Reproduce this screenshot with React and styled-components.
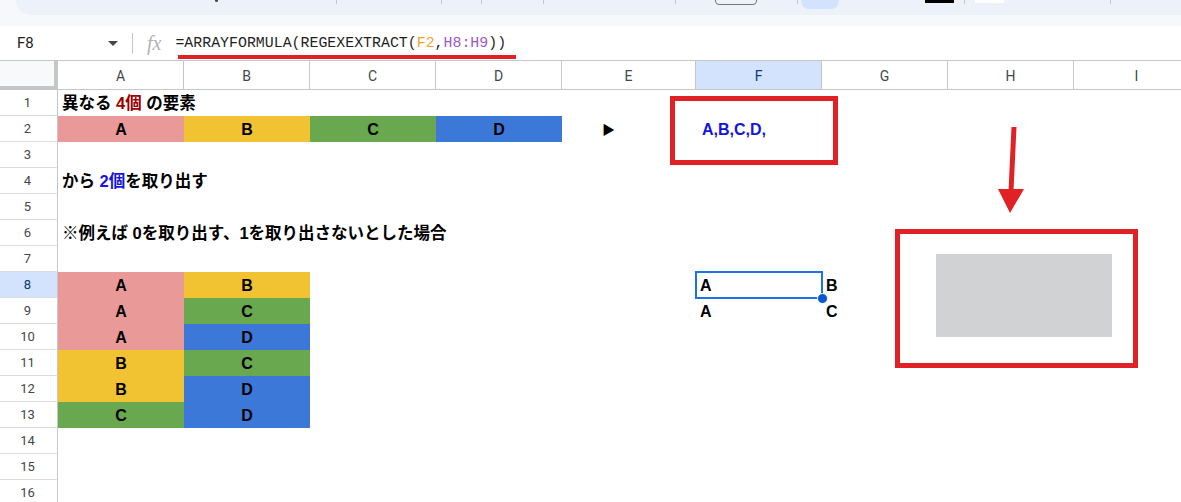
import React from 'react';
import styled, { createGlobalStyle } from 'styled-components';

const GlobalStyle = createGlobalStyle`
  html, body {
    margin: 0;
    padding: 0;
    background: #ffffff;
    overflow: hidden;
  }
  * {
    box-sizing: border-box;
  }
`;

const COLORS = {
  pink: '#ea9999',
  yellow: '#f1c232',
  green: '#6aa84f',
  blue: '#3c78d8',
};

const COLUMNS = ['A', 'B', 'C', 'D', 'E', 'F', 'G', 'H', 'I'];
const ROW_COUNT = 16;

// cell contents keyed by row number, then column letter
const CELLS = {
  1: {
    A: {
      rich: [
        { text: '異なる ' },
        { text: '4個', color: '#990000' },
        { text: ' の要素' },
      ],
    },
  },
  2: {
    A: { text: 'A', bg: COLORS.pink, align: 'center' },
    B: { text: 'B', bg: COLORS.yellow, align: 'center' },
    C: { text: 'C', bg: COLORS.green, align: 'center' },
    D: { text: 'D', bg: COLORS.blue, align: 'center' },
    E: { text: '▶', indent: 40, small: true },
    F: { text: 'A,B,C,D,', color: '#1414dc', indent: 6 },
  },
  4: {
    A: {
      rich: [
        { text: 'から ' },
        { text: '2個', color: '#1414dc' },
        { text: 'を取り出す' },
      ],
    },
  },
  6: {
    A: { rich: [{ text: '※例えば 0を取り出す、1を取り出さないとした場合' }] },
  },
  8: {
    A: { text: 'A', bg: COLORS.pink, align: 'center' },
    B: { text: 'B', bg: COLORS.yellow, align: 'center' },
    F: { text: 'A' },
    G: { text: 'B' },
  },
  9: {
    A: { text: 'A', bg: COLORS.pink, align: 'center' },
    B: { text: 'C', bg: COLORS.green, align: 'center' },
    F: { text: 'A' },
    G: { text: 'C' },
  },
  10: {
    A: { text: 'A', bg: COLORS.pink, align: 'center' },
    B: { text: 'D', bg: COLORS.blue, align: 'center' },
  },
  11: {
    A: { text: 'B', bg: COLORS.yellow, align: 'center' },
    B: { text: 'C', bg: COLORS.green, align: 'center' },
  },
  12: {
    A: { text: 'B', bg: COLORS.yellow, align: 'center' },
    B: { text: 'D', bg: COLORS.blue, align: 'center' },
  },
  13: {
    A: { text: 'C', bg: COLORS.green, align: 'center' },
    B: { text: 'D', bg: COLORS.blue, align: 'center' },
  },
};

const SELECTED_COL = 'F';
const SELECTED_ROW = 8;

const App = () => {
  return (
    <Page>
      <GlobalStyle />
      <TopBand>
        <Toolbar>
          <ToolDot $left={199} />
          <ToolSep $left={118} />
          <ToolSep $left={104} />
          <ToolSep $left={39} />
          <ToolSep $left={61} />
          <ToolSep $left={131} />
          <SizeBox $left={39} />
          <ToolSep $left={40} />
          <ActivePill $left={3} />
          <ColorBar $left={86} $color="#000000" />
          <ToolSep $left={10} />
          <ColorBar $left={10} $color="#ffffff" />
          <ToolSep $left={106} />
        </Toolbar>
      </TopBand>

      <FormulaBar>
        <NameBox>
          <span>F8</span>
          <Caret />
        </NameBox>
        <BarDivider />
        <FxLabel>fx</FxLabel>
        <FormulaText>
          =ARRAYFORMULA(REGEXEXTRACT(<RefA>F2</RefA>,<RefB>H8:H9</RefB>))
        </FormulaText>
      </FormulaBar>

      <Sheet>
        <Corner />
        {COLUMNS.map((col) => (
          <ColHeader key={col} $active={col === SELECTED_COL}>
            {col}
          </ColHeader>
        ))}

        {Array.from({ length: ROW_COUNT }, (_, i) => {
          const row = i + 1;
          const rowCells = CELLS[row] || {};
          return (
            <React.Fragment key={row}>
              <RowHeader $active={row === SELECTED_ROW}>{row}</RowHeader>
              {COLUMNS.map((col) => {
                const cell = rowCells[col];
                if (!cell) return <Cell key={col} />;
                return (
                  <Cell
                    key={col}
                    $bg={cell.bg}
                    $align={cell.align}
                    $indent={cell.indent}
                  >
                    {cell.rich ? (
                      <JapaneseText>
                        {cell.rich.map((part, idx) => (
                          <Part key={idx} $color={part.color}>
                            {part.text}
                          </Part>
                        ))}
                      </JapaneseText>
                    ) : (
                      <CellText $color={cell.color} $small={cell.small}>
                        {cell.text}
                      </CellText>
                    )}
                  </Cell>
                );
              })}
            </React.Fragment>
          );
        })}
      </Sheet>

      {/* annotations drawn over the sheet */}
      <Underline />
      <RedFrame $x={670} $y={96} $w={168} $h={69} />
      <RedFrame $x={895} $y={229} $w={243} $h={139} />
      <PlaceholderImage />
      <ArrowSvg width="40" height="100" viewBox="0 0 40 100">
        <line x1="20" y1="0" x2="17" y2="64" stroke="#e02226" strokeWidth="5" />
        <polygon points="4,62 30,62 16,86" fill="#e02226" />
      </ArrowSvg>
      <Selection>
        <FillHandle />
      </Selection>
    </Page>
  );
};

export default App;

const Page = styled.div`
  position: relative;
  width: 1181px;
  height: 502px;
  overflow: hidden;
  background: #ffffff;
`;

const TopBand = styled.div`
  height: 26px;
  background: #f6f8fc;
  padding-left: 16px;
`;

const Toolbar = styled.div`
  display: flex;
  align-items: flex-start;
  height: 15px;
  background: #edf2fa;
  border-bottom-left-radius: 18px;
  overflow: hidden;
`;

const ToolSep = styled.div`
  margin-left: ${(p) => p.$left}px;
  width: 1px;
  height: 4px;
  background: #c7c7c7;
  flex-shrink: 0;
`;

const ToolDot = styled.div`
  margin-left: ${(p) => p.$left}px;
  width: 3px;
  height: 2px;
  border-radius: 0 0 2px 2px;
  background: #444746;
  flex-shrink: 0;
`;

const SizeBox = styled.div`
  margin-left: ${(p) => p.$left}px;
  margin-top: -6px;
  width: 42px;
  height: 11px;
  border: 1px solid #747775;
  border-radius: 4px;
  flex-shrink: 0;
`;

const ActivePill = styled.div`
  margin-left: ${(p) => p.$left}px;
  margin-top: -8px;
  width: 38px;
  height: 17px;
  border-radius: 8px;
  background: #d3e3fd;
  flex-shrink: 0;
`;

const ColorBar = styled.div`
  margin-left: ${(p) => p.$left}px;
  width: 29px;
  height: 3px;
  background: ${(p) => p.$color};
  flex-shrink: 0;
`;

const FormulaBar = styled.div`
  display: flex;
  align-items: center;
  height: 35px;
  border-bottom: 1px solid #c4c7c5;
  background: #ffffff;
`;

const NameBox = styled.div`
  display: flex;
  align-items: center;
  justify-content: space-between;
  width: 128px;
  padding-left: 17px;
  padding-right: 10px;
  font-family: Roboto, 'Liberation Sans', sans-serif;
  font-size: 15px;
  color: #1f1f1f;
`;

const Caret = styled.span`
  width: 0;
  height: 0;
  border-left: 5px solid transparent;
  border-right: 5px solid transparent;
  border-top: 5px solid #444746;
`;

const BarDivider = styled.div`
  margin-left: 4px;
  width: 1px;
  height: 21px;
  background: #c4c7c5;
`;

const FxLabel = styled.span`
  margin-left: 14px;
  font-family: 'Liberation Serif', serif;
  font-style: italic;
  font-size: 20px;
  color: #b0b2b4;
  line-height: 1;
`;

const FormulaText = styled.span`
  margin-left: 14px;
  font-family: 'Liberation Mono', monospace;
  font-size: 14.9px;
  color: #1f1f1f;
  white-space: nowrap;
`;

const RefA = styled.span`
  color: #f4a42c;
`;

const RefB = styled.span`
  color: #9e58c6;
`;

const Sheet = styled.div`
  display: grid;
  grid-template-columns: 58px 126px 126px 126px 126px 134px 126px 126px 126px 126px;
  grid-template-rows: 29px;
  grid-auto-rows: 26px;
`;

const Corner = styled.div`
  background: #f8f9fa;
  border-right: 4px solid #c4c7c5;
  border-bottom: 4px solid #c4c7c5;
`;

const ColHeader = styled.div`
  display: flex;
  align-items: center;
  justify-content: center;
  padding-top: 1px;
  background: ${(p) => (p.$active ? '#d3e3fd' : '#ffffff')};
  border-right: 1px solid #c4c7c5;
  border-bottom: 1px solid #c4c7c5;
  font-family: Roboto, 'Liberation Sans', sans-serif;
  font-size: 14px;
  color: ${(p) => (p.$active ? '#0b3a7a' : '#444746')};
`;

const RowHeader = styled.div`
  display: flex;
  align-items: center;
  justify-content: center;
  padding-right: 2px;
  background: ${(p) => (p.$active ? '#d3e3fd' : '#ffffff')};
  border-right: 1px solid #c4c7c5;
  border-bottom: 1px solid #dadce0;
  font-family: Roboto, 'Liberation Sans', sans-serif;
  font-size: 13px;
  color: ${(p) => (p.$active ? '#0b3a7a' : '#444746')};
`;

const Cell = styled.div`
  display: flex;
  align-items: flex-end;
  justify-content: ${(p) => (p.$align === 'center' ? 'center' : 'flex-start')};
  padding: 0 0 3px ${(p) => (p.$indent != null ? p.$indent : 4)}px;
  ${(p) => (p.$align === 'center' ? 'padding-left: 0;' : '')}
  background: ${(p) => p.$bg || 'transparent'};
  white-space: nowrap;
  overflow: visible;
  font-family: 'Liberation Sans', 'Noto Sans CJK JP', sans-serif;
  font-weight: bold;
  font-size: 16px;
  line-height: 19px;
  color: #000000;
`;

const CellText = styled.span`
  color: ${(p) => p.$color || '#000000'};
  font-size: ${(p) => (p.$small ? '13px' : '16px')};
`;

const JapaneseText = styled.span`
  font-size: 16.5px;
  white-space: pre;
`;

const Part = styled.span`
  color: ${(p) => p.$color || '#000000'};
`;

const Underline = styled.div`
  position: absolute;
  left: 178px;
  top: 55px;
  width: 338px;
  height: 4px;
  background: #e02226;
`;

const RedFrame = styled.div`
  position: absolute;
  left: ${(p) => p.$x}px;
  top: ${(p) => p.$y}px;
  width: ${(p) => p.$w}px;
  height: ${(p) => p.$h}px;
  border: 5px solid #e02226;
`;

const PlaceholderImage = styled.div`
  position: absolute;
  left: 936px;
  top: 254px;
  width: 176px;
  height: 83px;
  background: #d1d2d3;
`;

const ArrowSvg = styled.svg`
  position: absolute;
  left: 994px;
  top: 127px;
`;

const Selection = styled.div`
  position: absolute;
  left: 695px;
  top: 271px;
  width: 128px;
  height: 28px;
  border: 2px solid #1a73e8;
`;

const FillHandle = styled.div`
  position: absolute;
  right: -7px;
  bottom: -7px;
  width: 11px;
  height: 11px;
  border-radius: 50%;
  background: #0b57d0;
  border: 1px solid #ffffff;
`;
